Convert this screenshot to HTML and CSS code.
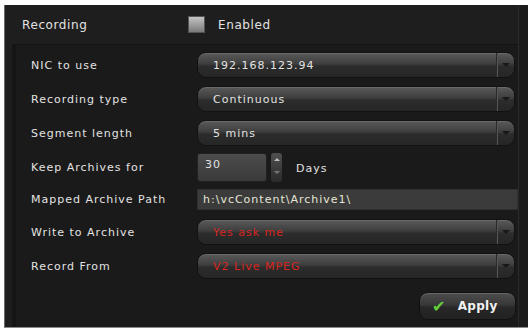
FILE: index.html
```html
<!DOCTYPE html>
<html lang="en">
<head>
  <meta charset="UTF-8">
  <title>Recording Settings</title>
  <link rel="stylesheet" href="styles.css">
</head>
<body>

<div class="frame">
  <!-- Header -->
  <div class="header">
    <span class="header-label">Recording</span>
    <span class="checkbox"></span>
    <span class="header-text">Enabled</span>
  </div>

  <!-- Settings -->
  <div class="settings">
    <div class="row">
      <div class="label">NIC to use</div>
      <div class="select"><span class="value">192.168.123.94</span><span class="arrow"></span></div>
    </div>
    <div class="row">
      <div class="label">Recording type</div>
      <div class="select"><span class="value">Continuous</span><span class="arrow"></span></div>
    </div>
    <div class="row">
      <div class="label">Segment length</div>
      <div class="select"><span class="value">5 mins</span><span class="arrow"></span></div>
    </div>
    <div class="row">
      <div class="label">Keep Archives for</div>
      <div class="spinner">
        <span class="spin-input">30</span>
        <span class="spin-buttons"><span class="up"></span><span class="down"></span></span>
      </div>
      <span class="unit">Days</span>
    </div>
    <div class="row short">
      <div class="label">Mapped Archive Path</div>
      <div class="text-input">h:\vcContent\Archive1\</div>
    </div>
    <div class="row">
      <div class="label">Write to Archive</div>
      <div class="select"><span class="value red">Yes ask me</span><span class="arrow"></span></div>
    </div>
    <div class="row">
      <div class="label">Record From</div>
      <div class="select"><span class="value red">V2 Live MPEG</span><span class="arrow"></span></div>
    </div>

    <div class="actions">
      <button class="apply"><span class="check">&#10004;</span>Apply</button>
    </div>
  </div>
</div>

</body>
</html>
```

FILE: styles.css
```css
/* Basic Styles */
body {
  margin: 0;
  padding: 5px 0 0 0;
  background-color: #fff;
  font-family: "DejaVu Sans", Verdana, sans-serif;
  font-size: 11px;
  letter-spacing: 1px;
  color: #e2e2e2;
}
.frame {
  margin-left: 4px;
  height: 322px;
  background-color: #1e1e1e;
  border-left: 1px solid #6a6a6a;
  border-bottom: 1px solid #8a8a8a;
  box-shadow: inset -9px 0 0 #1b1b1b, inset -10px 0 0 #2a2a2a;
}

/* Header */
.header {
  height: 39px;
  display: flex;
  align-items: center;
  padding-left: 17px;
  letter-spacing: 0.6px;
}
.header-label {
  width: 166px;
  font-size: 12px;
}
.checkbox {
  width: 15px;
  height: 15px;
  background: linear-gradient(#c4c4c4, #7a7a7a);
  border: 1px solid #555;
  margin-right: 13px;
}
.header-text {
  font-size: 12px;
}

/* Settings area */
.settings {
  margin: 0 10px 0 7px;
  padding-top: 3px;
  height: 279px;
  background-color: #1a1a1a;
  border-left: 4px solid #151515;
  border-top: 1px solid #141414;
}
.row {
  display: flex;
  align-items: center;
  height: 34px;
}
.row.short {
  height: 31px;
}
.label {
  width: 181px;
  padding-left: 15px;
  box-sizing: border-box;
  flex-shrink: 0;
}

/* Dropdowns */
.select {
  width: 316px;
  height: 24px;
  display: flex;
  align-items: center;
  border-radius: 9px;
  border: 1px solid #121212;
  background: linear-gradient(#5a5a5a, #3e3e3e 45%, #2c2c2c 55%, #262626);
  box-shadow: inset 0 1px 0 #6a6a6a;
}
.value {
  flex: 1;
  padding-left: 15px;
}
.value.red {
  color: #d8251e;
}
.arrow {
  width: 17px;
  height: 100%;
  border-left: 1px solid #2a2a2a;
  box-shadow: inset 1px 0 0 #555;
  position: relative;
}
.arrow::after {
  content: "";
  position: absolute;
  left: 5px;
  top: 10px;
  border-left: 4px solid transparent;
  border-right: 4px solid transparent;
  border-top: 4px solid #181818;
}

/* Spinner */
.spinner {
  display: flex;
  align-items: center;
}
.spin-input {
  width: 70px;
  height: 29px;
  line-height: 22px;
  padding-left: 7px;
  box-sizing: border-box;
  background: linear-gradient(#4c4c4c, #3a3a3a);
  border-radius: 3px;
  border: 1px solid #222;
}
.spin-buttons {
  width: 11px;
  height: 29px;
  margin-left: 4px;
  display: flex;
  flex-direction: column;
  background: linear-gradient(#505050, #2a2a2a);
  border-radius: 3px;
}
.spin-buttons span {
  flex: 1;
  position: relative;
}
.spin-buttons .up::after,
.spin-buttons .down::after {
  content: "";
  position: absolute;
  left: 3px;
  top: 5px;
  border-left: 3px solid transparent;
  border-right: 3px solid transparent;
}
.spin-buttons .up::after {
  border-bottom: 3px solid #bbb;
}
.spin-buttons .down::after {
  top: 4px;
  border-top: 3px solid #777;
}
.unit {
  margin-left: 14px;
  padding-top: 3px;
}

/* Text input */
.text-input {
  width: 314px;
  height: 19px;
  line-height: 19px;
  padding-left: 5px;
  background-color: #3b3b3b;
  border: 1px solid #2e2e2e;
  color: #e4e6d6;
}

/* Apply button */
.actions {
  display: flex;
  justify-content: flex-end;
  padding-right: 2px;
  margin-top: 9px;
}
.apply {
  width: 97px;
  height: 28px;
  border-radius: 9px;
  border: 1px solid #111;
  background: linear-gradient(#4e4e4e, #383838 45%, #272727 55%, #222);
  box-shadow: inset 0 1px 0 #666;
  color: #f2f2f2;
  font-family: "DejaVu Sans", Verdana, sans-serif;
  font-size: 12px;
  font-weight: bold;
  letter-spacing: 0.3px;
  display: flex;
  align-items: center;
  padding-left: 12px;
}
.check {
  color: #62cc3c;
  font-size: 16px;
  margin-right: 12px;
}
```
